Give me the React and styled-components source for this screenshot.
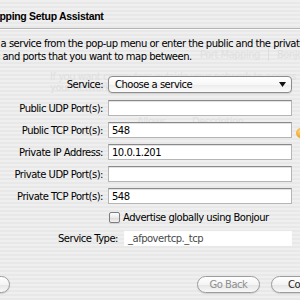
import React from "react";
import styled, { createGlobalStyle } from "styled-components";

const GlobalStyle = createGlobalStyle`
  html, body {
    margin: 0;
    padding: 0;
  }
  body {
    width: 300px;
    height: 300px;
    overflow: hidden;
    background: repeating-linear-gradient(to bottom, #efefef 0 2px, #e8e8e8 2px 4px);
    font-family: "DejaVu Sans", "Liberation Sans", sans-serif;
    font-size: 10px;
    letter-spacing: -0.5px;
    color: #000;
  }
`;

const Stage = styled.div`
  display: grid;
  width: 300px;
  height: 300px;
  overflow: hidden;
  & > * {
    grid-area: 1 / 1;
  }
`;

/* faint window content showing through the sheet */
const Backdrop = styled.div`
  display: flex;
  flex-direction: column;
  color: #dfdfdf;
  white-space: nowrap;
`;

const GhostTabs = styled.div`
  display: flex;
  align-items: center;
  height: 14px;
  margin: 47px 0 0 200px;
`;

const GhostDivider = styled.span`
  width: 1px;
  height: 13px;
  margin: 0 8px;
  background: #dedede;
`;

const GhostText = styled.div`
  margin: 10px 0 0 50px;
  line-height: 11px;
`;

const GhostHeader = styled.div`
  display: flex;
  gap: 26px;
  height: 12px;
  line-height: 12px;
  margin: 23px 0 0 137px;
`;

const GhostLight = styled.span`
  width: 10px;
  height: 10px;
  margin: 0 0 0 296px;
  border-radius: 50%;
  background: radial-gradient(circle at 40% 35%, #ffd27a, #f0a020 70%);
`;

const Sheet = styled.div`
  display: flex;
  flex-direction: column;
  width: 420px;
  margin-left: -60px;
  white-space: nowrap;
`;

const TitleBar = styled.div`
  display: flex;
  align-items: center;
  height: 29px;
  padding: 3px 0 0 23px;
  box-sizing: border-box;
  border-bottom: 1px solid #b4b4b4;
  box-shadow: 0 1px 0 #f9f9f9;
  font-family: "Liberation Sans", Arial, sans-serif;
  font-weight: bold;
  font-size: 10.5px;
  letter-spacing: -0.3px;
`;

const Intro = styled.p`
  margin: 0;
  padding: 8px 0 0 24px;
  line-height: 13px;
`;

const Form = styled.div`
  display: flex;
  flex-direction: column;
  margin-top: 13px;
  padding-left: 24px;
`;

const Row = styled.div`
  display: flex;
  align-items: center;
  height: ${(p) => p.$h}px;
  margin-top: ${(p) => p.$gap || 0}px;
`;

const Label = styled.span`
  width: ${(p) => p.$w}px;
  margin-right: ${(p) => p.$space}px;
  text-align: right;
`;

const Popup = styled.div`
  display: flex;
  align-items: center;
  justify-content: space-between;
  width: 184px;
  height: 17px;
  box-sizing: border-box;
  padding: 0 5px 0 6px;
  border: 1px solid #8c8c8c;
  border-radius: 4px;
  background: linear-gradient(#ffffff, #f7f7f7 50%, #ededed 55%, #fbfbfb);
  box-shadow: 0 1px 1px rgba(0, 0, 0, 0.12);
`;

const Field = styled.div`
  display: flex;
  align-items: center;
  width: ${(p) => p.$w || 184}px;
  height: ${(p) => p.$h || 16}px;
  box-sizing: border-box;
  padding-left: 3px;
  background: #fff;
  border: 1px solid ${(p) => (p.$plain ? "#fdfdfd" : "#b5b5b5")};
  border-top-color: ${(p) => (p.$plain ? "#fdfdfd" : "#8a8a8a")};
  box-shadow: ${(p) => (p.$plain ? "none" : "inset 0 1px 0 #e2e2e2")};
  color: ${(p) => (p.$plain ? "#4a4a4a" : "#000")};
`;

const CheckRow = styled.label`
  display: flex;
  align-items: center;
  gap: 3px;
  margin-left: 145px;
`;

const Box = styled.span`
  width: 11px;
  height: 11px;
  box-sizing: border-box;
  border: 1px solid #7d7d7d;
  border-radius: 2px;
  background: linear-gradient(#fdfdfd, #e9e9e9 55%, #dcdcdc 60%, #f4f4f4);
  box-shadow: 0 1px 1px rgba(0, 0, 0, 0.1);
`;

const Footer = styled.div`
  display: flex;
  align-items: center;
  gap: 11px;
  height: 17px;
  margin-top: 30px;
  padding: 0 14px 0 6px;
`;

const Button = styled.div`
  display: flex;
  align-items: center;
  justify-content: center;
  width: ${(p) => p.$w}px;
  height: 17px;
  box-sizing: border-box;
  margin-left: ${(p) => (p.$push ? "auto" : "0")};
  border: 1px solid #9c9c9c;
  border-radius: 9px;
  background: linear-gradient(#ffffff, #f4f4f4 50%, #e6e6e6 55%, #f8f8f8);
  box-shadow: 0 1px 1px rgba(0, 0, 0, 0.12);
  color: ${(p) => (p.$disabled ? "#8e8e8e" : "#222")};
`;

const Arrow = () => (
  <svg width="7" height="5" viewBox="0 0 7 5">
    <path d="M0 0 H7 L3.5 5 Z" fill="#111" />
  </svg>
);

const ports = [
  ["Public UDP Port(s):", ""],
  ["Public TCP Port(s):", "548"],
  ["Private IP Address:", "10.0.1.201"],
  ["Private UDP Port(s):", ""],
  ["Private TCP Port(s):", "548"],
];

export default function App() {
  return (
    <>
      <GlobalStyle />
      <Stage>
        <Backdrop>
          <GhostTabs>
            Port Mapping
            <GhostDivider />
            Bonjour
          </GhostTabs>
          <GhostText>
            If you want computers outside your network to access
            <br />
            your network, set up a port mapping.
          </GhostText>
          <GhostHeader>
            <span>Allows</span>
            <span>Description</span>
          </GhostHeader>
          <GhostLight />
        </Backdrop>

        <Sheet>
          <TitleBar>Port Mapping Setup Assistant</TitleBar>
          <Intro>
            Choose a service from the pop-up menu or enter the public and the private IP
            <br />
            address and ports that you want to map between.
          </Intro>
          <Form>
            <Row $h={17}>
              <Label $w={139} $space={5}>Service:</Label>
              <Popup>
                <span>Choose a service</span>
                <Arrow />
              </Popup>
            </Row>
            {ports.map(([label, value], i) => (
              <Row key={label} $h={16} $gap={i === 0 ? 7 : 6}>
                <Label $w={139} $space={5}>{label}</Label>
                <Field>{value}</Field>
              </Row>
            ))}
            <Row $h={14} $gap={6}>
              <CheckRow>
                <Box />
                Advertise globally using Bonjour
              </CheckRow>
            </Row>
            <Row $h={15} $gap={7}>
              <Label $w={154} $space={6}>Service Type:</Label>
              <Field $plain $w={168} $h={15}>_afpovertcp._tcp</Field>
            </Row>
          </Form>
          <Footer>
            <Button $w={64}>Cancel</Button>
            <Button $w={63} $push $disabled>Go Back</Button>
            <Button $w={75}>Continue</Button>
          </Footer>
        </Sheet>
      </Stage>
    </>
  );
}
